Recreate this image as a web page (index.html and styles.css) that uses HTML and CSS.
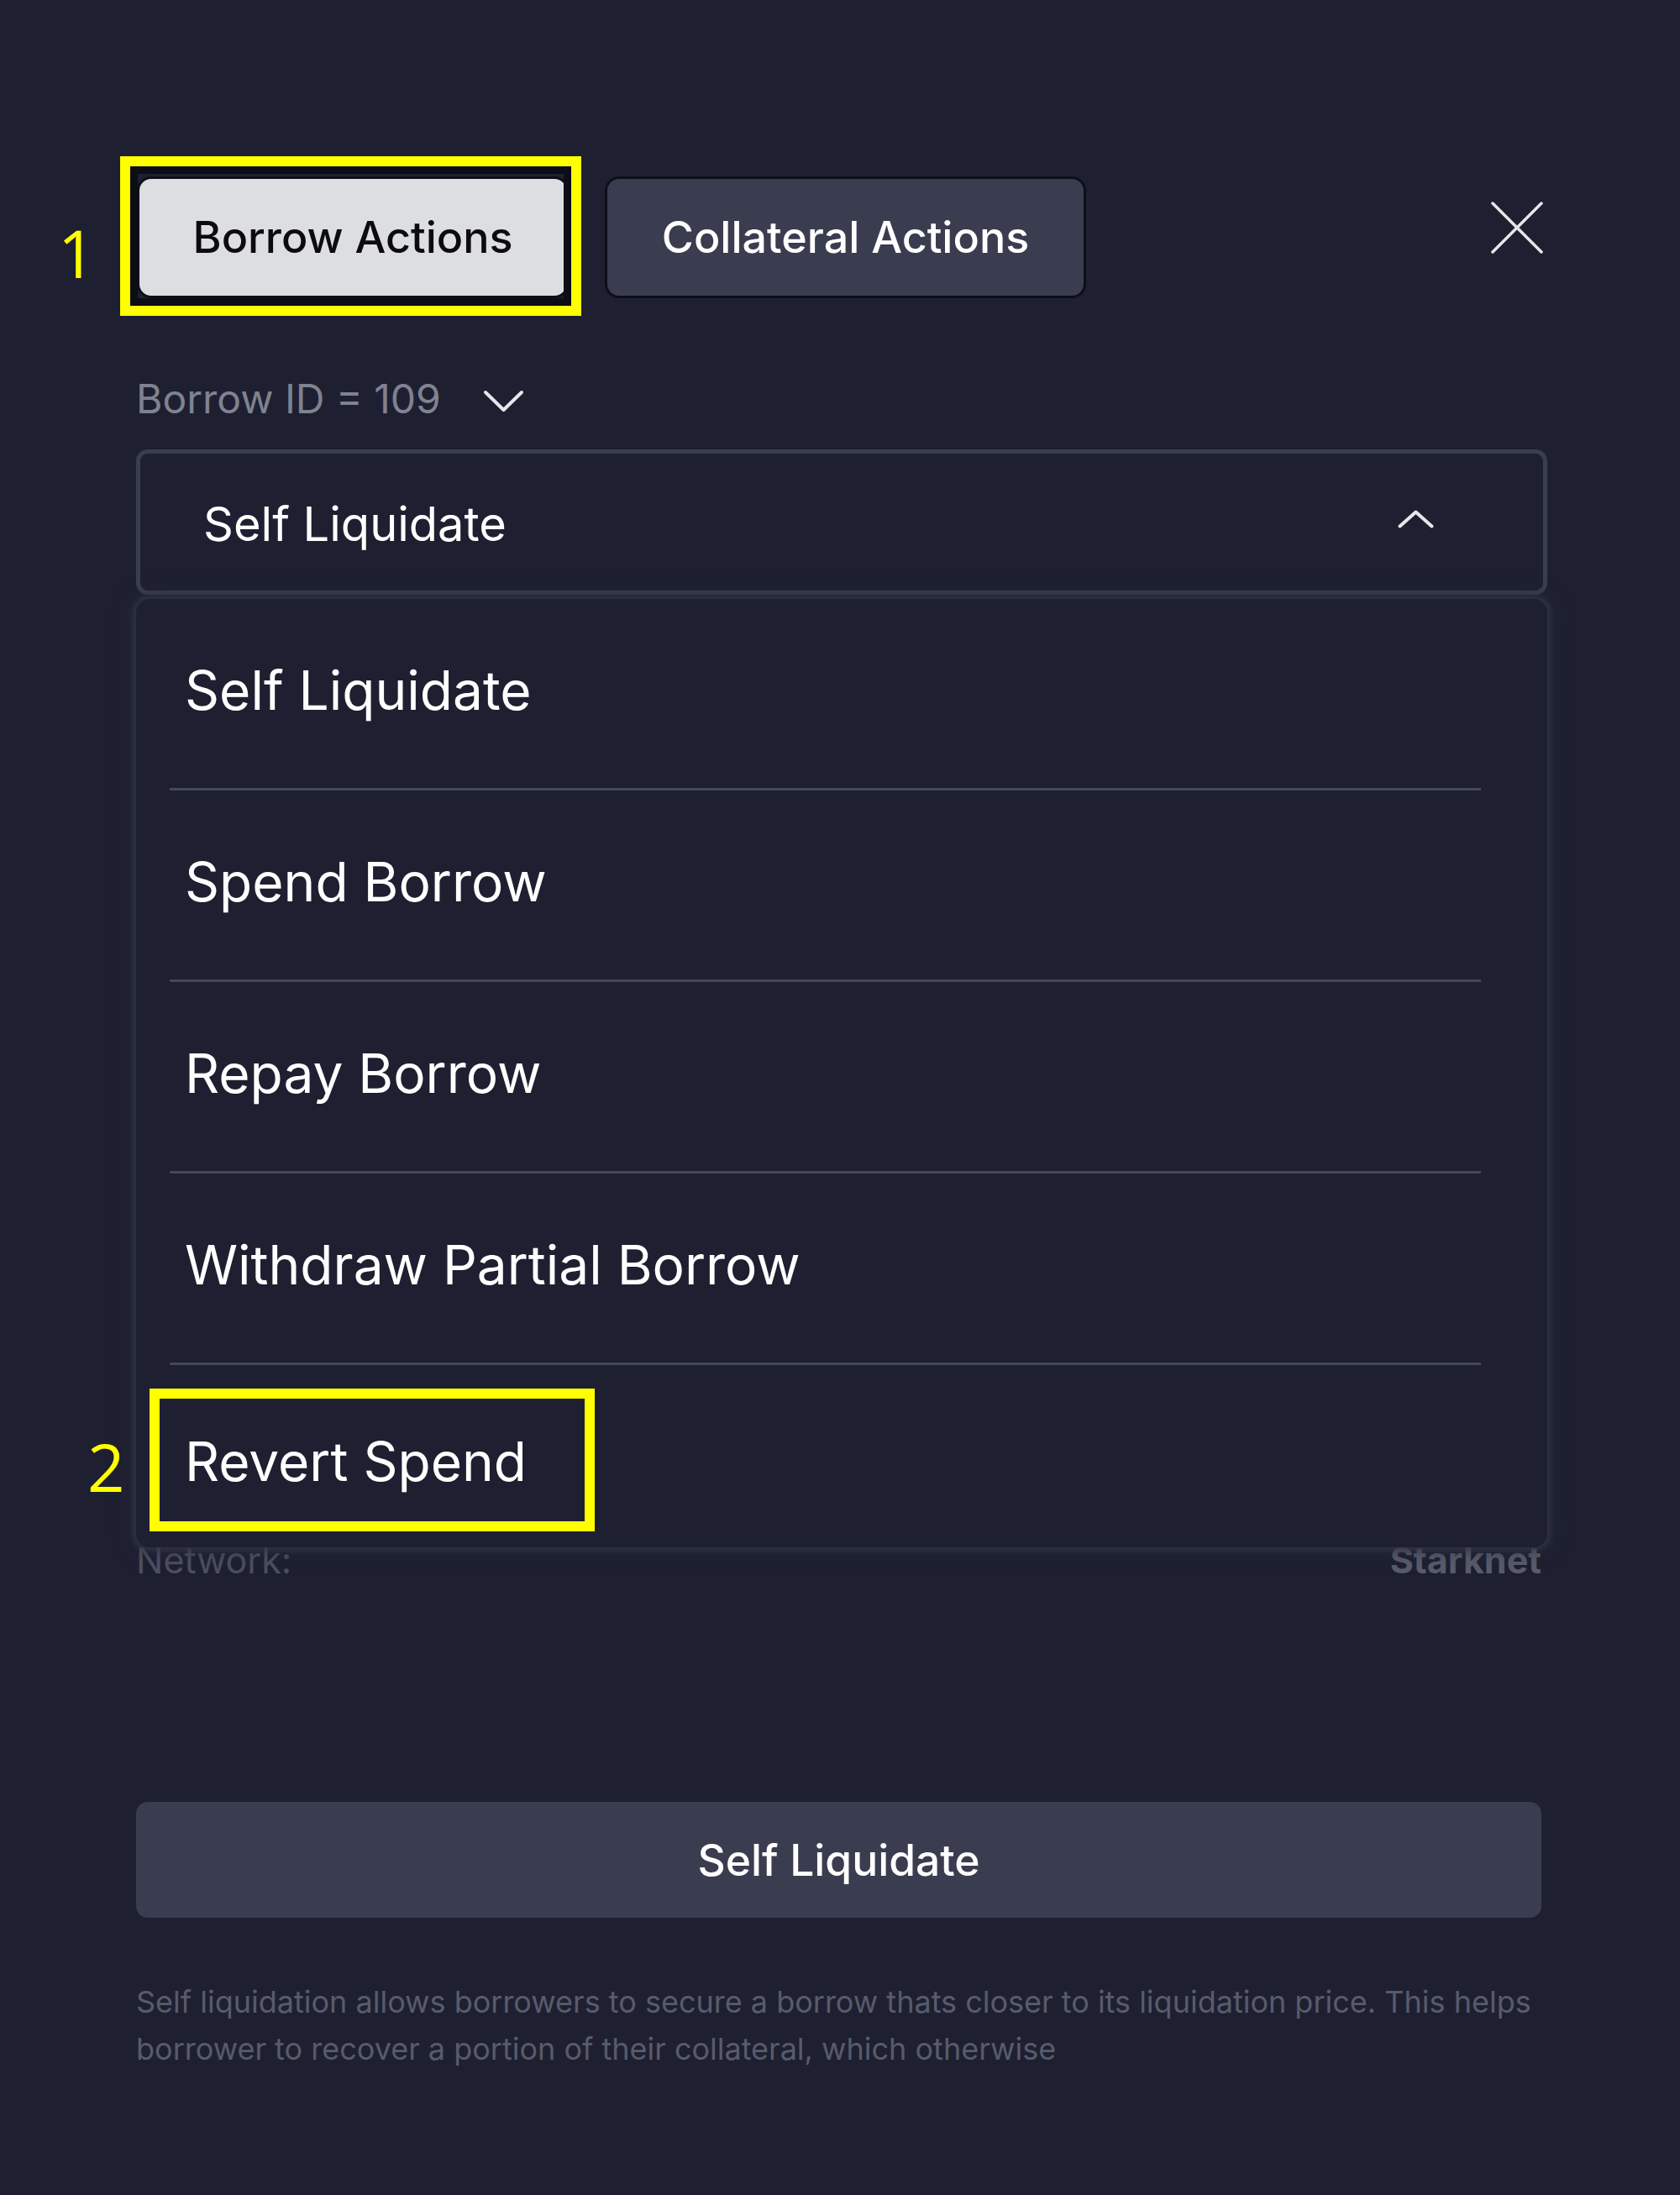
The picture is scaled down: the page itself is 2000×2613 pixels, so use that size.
FILE: index.html
```html
<!DOCTYPE html>
<html lang="en">
<head>
<meta charset="utf-8">
<title>Borrow Actions</title>
<link rel="stylesheet" href="styles.css">
</head>
<body>
<div class="modal">
  <div class="tabs">
    <button class="tab tab-active">Borrow Actions</button>
    <button class="tab">Collateral Actions</button>
    <button class="close" aria-label="Close">
      <svg width="62" height="62" viewBox="0 0 62 62"><path d="M2 2 L60 60 M60 2 L2 60" stroke="#e6e7ea" stroke-width="3.5" stroke-linecap="round" fill="none"/></svg>
    </button>
  </div>

  <div class="borrow-id">
    <span>Borrow ID = 109</span>
    <svg class="chev-down" width="49" height="27" viewBox="0 0 49 27"><path d="M3 3 L24.5 24 L46 3" stroke="#e6e7ea" stroke-width="4" stroke-linecap="round" stroke-linejoin="round" fill="none"/></svg>
  </div>

  <div class="select-wrap">
    <div class="select">
      <span>Self Liquidate</span>
      <svg width="43" height="22" viewBox="0 0 43 22"><path d="M2.5 19.5 L21.5 2.5 L40.5 19.5" stroke="#e6e7ea" stroke-width="4" stroke-linecap="round" stroke-linejoin="round" fill="none"/></svg>
    </div>
    <ul class="menu">
      <li class="menu-item">Self Liquidate</li>
      <li class="menu-item">Spend Borrow</li>
      <li class="menu-item">Repay Borrow</li>
      <li class="menu-item">Withdraw Partial Borrow</li>
      <li class="menu-item menu-last">Revert Spend</li>
    </ul>
  </div>

  <div class="network-row">
    <span>Network:</span>
    <span class="network-value">Starknet</span>
  </div>

  <button class="submit">Self Liquidate</button>

  <p class="desc">Self liquidation allows borrowers to secure a borrow thats closer to its liquidation price. This helps borrower to recover a portion of their collateral, which otherwise</p>

  <div class="anno anno-box-1"></div>
  <div class="anno anno-num anno-num-1">1</div>
  <div class="anno anno-box-2"></div>
  <div class="anno anno-num anno-num-2">2</div>
</div>
</body>
</html>
```

FILE: styles.css
```css
html, body {
  margin: 0;
  padding: 0;
  background: #1e2031;
}
body {
  font-family: Inter, "Noto Sans", sans-serif;
  color: #ffffff;
  min-height: 2613px;
}
.modal {
  position: relative;
  width: 1680px;
  padding: 210px 0 0 162px;
}
.tabs {
  display: flex;
  align-items: flex-start;
  gap: 40px;
  height: 145px;
}
.tab {
  font-family: Inter, sans-serif;
  font-size: 52px;
  font-weight: 500;
  height: 145px;
  border: 3px solid #0d0e17;
  border-radius: 17px;
  background: #3a3c4f;
  color: #ffffff;
  padding: 0;
  cursor: pointer;
}
.tab-active {
  width: 514px;
  background: #dcdee2;
  color: #0b0b10;
  margin-left: 1px;
}
.tab:not(.tab-active) {
  width: 573px;
  margin-left: 3px;
}
.close {
  margin-left: auto;
  margin-right: 5px;
  margin-top: 30px;
  background: none;
  border: 0;
  padding: 0;
  width: 62px;
  height: 62px;
  display: block;
}
.close svg { display: block; }

.borrow-id {
  margin-top: 91px;
  height: 58px;
  display: flex;
  align-items: center;
  gap: 50px;
  font-size: 48px;
  line-height: 58px;
  color: #7f8291;
}
.chev-down { margin-top: 4px; }

.select-wrap {
  position: relative;
  margin-top: 31px;
}
.select {
  box-sizing: border-box;
  height: 173px;
  border: 5px solid #3b3e52;
  border-radius: 14px;
  display: flex;
  align-items: center;
  justify-content: space-between;
  padding: 0 130px 0 75px;
  font-size: 56px;
  color: #ffffff;
}
.select span { margin-top: 4px; }
.select svg { margin-top: -8px; }

.menu {
  position: absolute;
  left: 0;
  top: 178px;
  width: 1680px;
  height: 1129px;
  box-sizing: border-box;
  margin: 0;
  padding: 0;
  list-style: none;
  background: #1e2031;
  border-radius: 16px;
  box-shadow: 0 0 6px 4px rgba(52, 55, 75, 0.75), 0 0 22px 6px rgba(40, 43, 60, 0.5);
  z-index: 5;
}
.menu-item {
  box-sizing: border-box;
  height: 228px;
  margin: 0 79px 0 40px;
  padding-left: 18px;
  padding-bottom: 8px;
  display: flex;
  align-items: center;
  font-size: 64px;
  color: #ffffff;
  border-bottom: 3px solid #454859;
}
.menu-last {
  border-bottom: 0;
  padding-bottom: 0;
  padding-top: 0;
}

.network-row {
  margin-top: 1124px;
  margin-right: 7px;
  display: flex;
  justify-content: space-between;
  font-size: 43px;
  line-height: 50px;
  color: #4c4f60;
}
.network-value {
  font-weight: 700;
  color: #595c6b;
}

.submit {
  display: block;
  margin-top: 263px;
  width: 1673px;
  height: 138px;
  border: 0;
  border-radius: 14px;
  background: #3a3c4f;
  color: #ffffff;
  font-family: Inter, sans-serif;
  font-size: 51.5px;
  font-weight: 500;
}

.desc {
  margin: 72px 0 0 0;
  width: 1673px;
  font-size: 36px;
  line-height: 56px;
  color: #585b6b;
}

.anno {
  position: absolute;
  pointer-events: none;
  z-index: 10;
}
.anno-box-1 {
  left: 143px;
  top: 186px;
  width: 549px;
  height: 190px;
  box-sizing: border-box;
  border: 12px solid #ffff00;
  box-shadow: inset 0 0 0 9px #0c0d16;
}
.anno-box-2 {
  left: 178px;
  top: 1653px;
  width: 530px;
  height: 170px;
  box-sizing: border-box;
  border: 12px solid #ffff00;
}
.anno-num {
  color: #ffff00;
  font-family: "Open Sans", sans-serif;
  font-weight: 400;
  font-size: 78px;
  line-height: 1;
}
.anno-num-1 {
  left: 69px;
  top: 262px;
}
.anno-num-2 {
  left: 104px;
  top: 1707px;
}
```
